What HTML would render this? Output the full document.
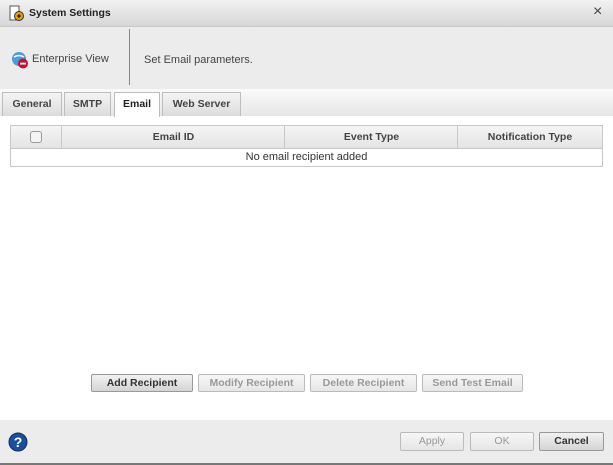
<!DOCTYPE html>
<html><head><style>
*{box-sizing:border-box;margin:0;padding:0}
body{width:613px;height:465px;position:relative;background:#fff;font-family:"Liberation Sans",Arial,sans-serif;font-size:11px;color:#333;overflow:hidden}
.a{position:absolute}
.title{left:0;top:0;width:613px;height:27px;background:linear-gradient(#f2f2f2,#d6d6d6);border-bottom:1px solid #c8c8c8}
.hdr{left:0;top:27px;width:613px;height:62px;background:#ececec}
.tabbar{left:0;top:89px;width:613px;height:27px;background:linear-gradient(#fafafa,#e6e6e6)}
.tab{position:absolute;top:92px;height:24px;border:1px solid #bdbdbd;border-bottom:none;background:linear-gradient(#f4f4f4,#dcdcdc);font-weight:bold;color:#444;text-align:center;line-height:22px;font-size:10.5px}
.tab.on{background:#fff;color:#222;height:25px}
.btn{position:absolute;height:18px;border:1px solid #bbb;border-radius:2px;background:linear-gradient(#f7f7f7,#e6e6e6);text-align:center;line-height:16px;font-size:10.5px;font-weight:bold;color:#999}
.btn.en{color:#333;border-color:#999;background:linear-gradient(#f2f2f2,#d4d4d4)}
.th{position:absolute;top:0;height:23px;line-height:23px;text-align:center;font-weight:bold;color:#444;border-left:1px solid #c8c8c8;font-size:10.5px}
</style></head><body>
<div class="a title"></div>
<svg class="a" style="left:9px;top:5px" width="16" height="17" viewBox="0 0 16 17"><rect x="1" y="1" width="9" height="14" fill="#fff" stroke="#555"/><circle cx="10" cy="11" r="4.5" fill="#e8a000" stroke="#333"/><circle cx="10" cy="11" r="1.6" fill="#222"/></svg>
<div class="a" style="left:29px;top:7px;font-weight:bold;font-size:10.5px;color:#222">System Settings</div>
<div class="a" style="left:593px;top:3px;font-size:16px;color:#444">×</div>
<div class="a hdr"></div>
<svg class="a" style="left:11px;top:51px" width="18" height="18" viewBox="0 0 18 18"><circle cx="8" cy="8" r="7" fill="#4a9be0"/><path d="M3 6q5-3 10 0" stroke="#fff" fill="none" stroke-width="1.5"/><circle cx="12" cy="12.5" r="5" fill="#c8102e"/><rect x="9" y="11.7" width="6" height="1.8" fill="#fff"/></svg>
<div class="a" style="left:32px;top:53px;color:#444">Enterprise View</div>
<div class="a" style="left:129px;top:29px;width:1px;height:56px;background:#888"></div>
<div class="a" style="left:144px;top:54px;color:#444">Set Email parameters.</div>
<div class="a tabbar"></div>
<div class="tab" style="left:2px;width:60px">General</div>
<div class="tab" style="left:64px;width:47px">SMTP</div>
<div class="tab on" style="left:114px;width:46px">Email</div>
<div class="tab" style="left:162px;width:79px">Web Server</div>
<div class="a" style="left:10px;top:125px;width:593px;height:42px;border:1px solid #c8c8c8">
<div style="position:absolute;left:0;top:0;width:591px;height:23px;background:linear-gradient(#f5f5f5,#e4e4e4);border-bottom:1px solid #c8c8c8"></div>
<div style="position:absolute;left:19px;top:5px;width:12px;height:12px;border:1px solid #999;border-radius:3px;background:#f4f4f4"></div>
<div class="th" style="left:50px;width:224px">Email ID</div>
<div class="th" style="left:273px;width:174px">Event Type</div>
<div class="th" style="left:446px;width:145px">Notification Type</div>
<div style="position:absolute;left:0;top:25px;width:591px;text-align:center;color:#333">No email recipient added</div>
</div>
<div class="btn en" style="left:91px;top:374px;width:102px">Add Recipient</div>
<div class="btn" style="left:198px;top:374px;width:107px">Modify Recipient</div>
<div class="btn" style="left:310px;top:374px;width:107px">Delete Recipient</div>
<div class="btn" style="left:422px;top:374px;width:101px">Send Test Email</div>
<div class="a" style="left:0;top:420px;width:613px;height:43px;background:#ececec"></div>
<div class="a" style="left:0;top:463px;width:613px;height:2px;background:#777"></div>
<svg class="a" style="left:8px;top:432px" width="20" height="20" viewBox="0 0 20 20"><circle cx="10" cy="10" r="9" fill="#1a4f9c" stroke="#0d2f66"/><text x="10" y="15" font-family="Liberation Sans" font-weight="bold" font-size="14" fill="#fff" text-anchor="middle">?</text></svg>
<div class="btn" style="left:400px;top:432px;width:64px;height:19px;line-height:17px;font-weight:normal">Apply</div>
<div class="btn" style="left:470px;top:432px;width:64px;height:19px;line-height:17px;font-weight:normal">OK</div>
<div class="btn en" style="left:539px;top:432px;width:65px;height:19px;line-height:17px">Cancel</div>
</body></html>
